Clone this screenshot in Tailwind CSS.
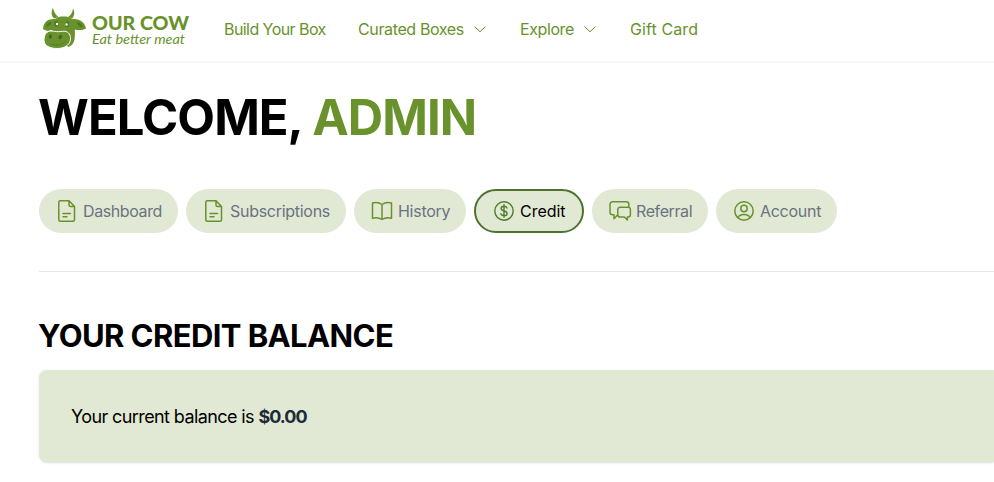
<!DOCTYPE html>
<html lang="en">
<head>
<meta charset="utf-8">
<title>Our Cow – Credit</title>
<script src="https://cdn.jsdelivr.net/npm/@tailwindcss/browser@4"></script>
</head>
<body class="w-full h-[482px] overflow-hidden bg-white font-['Inter','Liberation_Sans',sans-serif] text-black">
<header class="flex h-[63px] items-start border-b-2 border-[#f9f9f9] pl-[42px]">
  <svg class="mt-[6px] h-[44px] w-[148px] shrink-0" viewBox="0 0 148 44" aria-label="Our Cow">
    <g fill="#69922c">
      <path d="M11 2C9 5.500 9 9.500 12 12.500L16.500 11C13.500 9 12 6 11 2Z"/>
      <path d="M31 2.500C33 6 32.500 10 30 12.800L26 11C29 9 30.500 6.500 31 2.500Z"/>
      <path d="M13 13C15.500 11 18 10.500 21.500 10.500s6 .5 8.500 2.700C36 12.500 42.500 15 44 22.500c-3.500 1.700-7.500 2-11.300 1 .3 4 .3 7-.2 10-.7 3.800-2.500 6-6 7.500L11 29 10 24C7 25.200 3.500 25 1 23 1.500 15 7 12.500 13 13Z"/>
      <path d="M2 34c0-5.500 2.800-9 7-9 3 0 4.200.7 7.200.7s5-1 8-.1c3.500 1.200 5 4.800 4 9.200-1 4.500-6 7.700-13 7.700S2 40 2 34Z" stroke="#fff" stroke-width="1"/>
    </g>
    <path d="M4 20.500c.8-3 2.700-4.500 5.500-4.700-.5 3.300-2.300 5-5.500 4.700Zm31-4.200c3.200 0 5 1.700 5.800 4.700-3 .3-5.300-1.500-5.800-4.700Z" fill="#4b7726"/>
    <ellipse cx="14.300" cy="17.700" rx="2" ry="3" fill="#4b7726"/><ellipse cx="25.300" cy="18.200" rx="2" ry="3" fill="#4b7726"/>
    <circle cx="15" cy="18" r="1.200" fill="#fff"/><circle cx="24.600" cy="18.500" r="1.200" fill="#fff"/>
    <ellipse cx="8.300" cy="30.500" rx="1.500" ry="2.200" fill="#3f6720"/><ellipse cx="18.300" cy="31" rx="1.700" ry="2.400" transform="rotate(20 18.300 31)" fill="#3f6720"/>
    <path d="M9 38.300c5 1.500 10.500.8 14-2.300" fill="none" stroke="#4b7726" stroke-width=".7" stroke-linecap="round"/>
    <text x="50" y="24" textLength="97" lengthAdjust="spacingAndGlyphs" class="font-['Lato',sans-serif] text-[18.500px] font-black" fill="#69922c">OUR COW</text>
    <text x="50" y="38" textLength="93" lengthAdjust="spacingAndGlyphs" class="font-['Lato',sans-serif] text-[13px] font-normal italic" fill="#69922c">Eat better meat</text>
  </svg>
  <nav class="ml-[34px] mt-[17px] flex h-6 items-center gap-8 whitespace-nowrap text-[16px] leading-6 text-[#69922c]">
    <a class="w-[102px] tracking-[-0.560px]">Build Your Box</a>
    <a class="flex w-[130px] items-center justify-between tracking-[-0.370px]">Curated Boxes
      <svg class="size-4" viewBox="0 0 16 16" fill="none" stroke="currentColor" stroke-width="1"><path d="m2.500 5.500 5.500 5.300 5.500-5.300"/></svg></a>
    <a class="flex w-[78px] items-center justify-between tracking-[-0.400px]">Explore
      <svg class="size-4" viewBox="0 0 16 16" fill="none" stroke="currentColor" stroke-width="1"><path d="m2.500 5.500 5.500 5.300 5.500-5.300"/></svg></a>
    <a class="tracking-[0.100px]">Gift Card</a>
  </nav>
</header>
<main class="pl-[39px]">
  <h1 class="-ml-px mt-[31px] h-12 whitespace-nowrap text-[49px] font-bold leading-[48px] tracking-[-0.960px]">WELCOME, <span class="text-[#69922c]">ADMIN</span></h1>
  <div class="mt-[47px] flex h-11 gap-2 whitespace-nowrap text-[16px] text-[#6b7280] [&>a]:flex [&>a]:items-center [&>a]:gap-1 [&>a]:rounded-full [&>a]:bg-[#e1e9d4] [&>a]:pl-4 [&_svg]:size-6 [&_svg]:shrink-0 [&_svg]:text-[#69922c]">
    <a class="w-[139px] tracking-[-0.400px]"><svg viewBox="0 0 24 24" fill="none" stroke="currentColor" stroke-width="1.500" stroke-linecap="round" stroke-linejoin="round"><path d="M14 1.800H5.300a1.500 1.500 0 0 0-1.500 1.500v17.400a1.500 1.500 0 0 0 1.500 1.500h12.700a1.500 1.500 0 0 0 1.500-1.500V7.500L14 1.800v4.200a1.500 1.500 0 0 0 1.500 1.500h4M8 14.500h7.500M8 17.700h4"/></svg>Dashboard</a>
    <a class="w-[160px] tracking-[-0.280px]"><svg viewBox="0 0 24 24" fill="none" stroke="currentColor" stroke-width="1.500" stroke-linecap="round" stroke-linejoin="round"><path d="M14 1.800H5.300a1.500 1.500 0 0 0-1.500 1.500v17.400a1.500 1.500 0 0 0 1.500 1.500h12.700a1.500 1.500 0 0 0 1.500-1.500V7.500L14 1.800v4.200a1.500 1.500 0 0 0 1.500 1.500h4M8 14.500h7.500M8 17.700h4"/></svg>Subscriptions</a>
    <a class="w-[112px] tracking-[-0.270px]"><svg viewBox="0 0 24 24" fill="none" stroke="currentColor" stroke-width="1.500" stroke-linejoin="round"><path d="M12 5.500C9.500 3.600 6 3 2.500 4v15.200c3.500-1 7-.4 9.500 1.300 2.500-1.700 6-2.300 9.500-1.300V4C18 3 14.500 3.600 12 5.500Zm0 0v15"/></svg>History</a>
    <a class="w-[110px] border-2 border-[#4d7230] text-black tracking-[-0.030px]"><svg viewBox="0 0 24 24" fill="none" stroke="#4d7d28" stroke-width="1.400" stroke-linecap="round"><circle cx="12" cy="12" r="9.200"/><path d="M15 9c-.5-1.200-1.600-1.700-3-1.700-1.700 0-2.900.8-2.900 2.200 0 3.300 6 1.600 6 4.900 0 1.500-1.400 2.300-3.100 2.300-1.600 0-2.800-.6-3.300-1.900M12 5.700v12.600"/></svg>Credit</a>
    <a class="w-[116px] tracking-[-0.400px]"><svg viewBox="0 0 24 24" fill="none" stroke="currentColor" stroke-width="1.500" stroke-linejoin="round"><path d="M9.800 16.500H9L6 19.700v-4H4.500A2.500 2.500 0 0 1 2 13.200V5.300a2.500 2.500 0 0 1 2.500-2.500h13.800a2.500 2.500 0 0 1 2.500 2.500V8.300M12 8.300h8.200a2.200 2.200 0 0 1 2.200 2.200v5.300A2.200 2.200 0 0 1 20.200 18h-.8v3L16.400 18H12a2.200 2.200 0 0 1-2.200-2.200v-5.300A2.200 2.200 0 0 1 12 8.300Z"/></svg>Referral</a>
    <a class="w-[121px] tracking-[-0.280px]"><svg viewBox="0 0 24 24" fill="none" stroke="currentColor" stroke-width="1.500" stroke-linecap="round"><circle cx="12" cy="12" r="9.200"/><circle cx="12" cy="9.500" r="3.200"/><path d="M6 18.700c.8-2 3-3.100 6-3.100s5.200 1.100 6 3.100"/></svg>Account</a>
  </div>
  <hr class="mt-[38px] border-[#e5e7eb]">
  <h2 class="-ml-px mt-[46px] h-9 whitespace-nowrap text-[31px] font-bold leading-9 tracking-[-0.600px]">YOUR CREDIT BALANCE</h2>
  <section class="mt-4 flex h-[92px] items-center rounded-l-lg bg-[#e1e9d4] pl-8 pt-0.5 shadow-sm">
    <p class="whitespace-nowrap text-[18px] leading-7 tracking-[-0.600px]">Your current balance is <strong class="font-bold tracking-[-1px] text-[#1f2937]">$0.00</strong></p>
  </section>
</main>
</body>
</html>
